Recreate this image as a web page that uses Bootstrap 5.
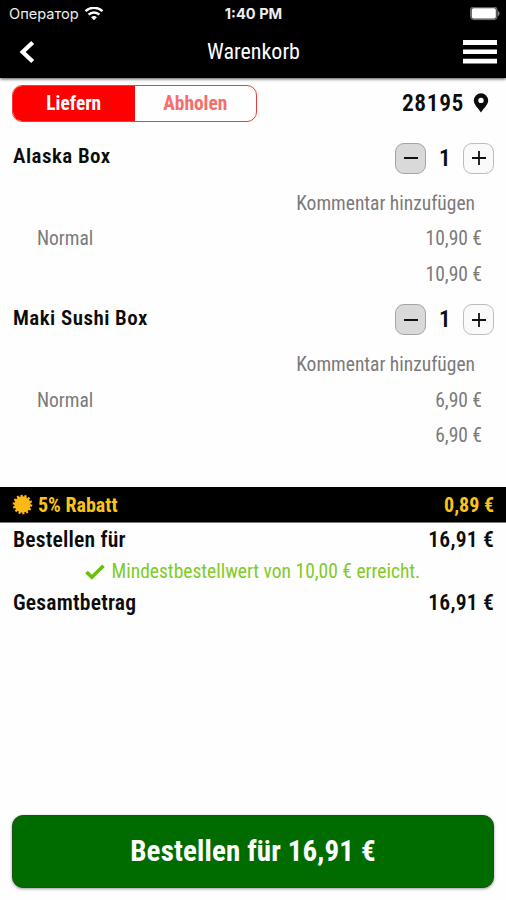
<!DOCTYPE html>
<html lang="de">
<head>
<meta charset="utf-8">
<meta name="viewport" content="width=device-width, initial-scale=1">
<title>Warenkorb</title>
<link href="https://cdn.jsdelivr.net/npm/bootstrap@5.3.0/dist/css/bootstrap.min.css" rel="stylesheet">
<style>
  body { font-family: "Roboto Condensed", Roboto, sans-serif; font-stretch: 75%; color: #0c0c0c; background: #fefefe; line-height: 1; }
  .screen { width: 506px; height: 900px; overflow: hidden; white-space: nowrap; }
  .app-head { height: 78px; background: #000; color: #fff; box-shadow: 0 1px 3px rgba(0,0,0,.7); }
  .status { height: 28px; padding: 0 6px 0 9px; font-family: Inter, Roboto, sans-serif; font-size: 14.6px; color: #eee; }
  .clock { margin-right: 2px; }
  .title-bar { height: 48px; padding: 0 9px 0 19px; font-size: 22px; }
  .page-title { margin-right: 9px; }
  .side { width: 100px; }
  .tools { height: 52px; padding: 0 15px 2px 12px; }
  .switch { width: 245px; height: 37px; border: 1px solid #f43a3a; border-radius: 10px; overflow: hidden; font-size: 19.4px; }
  .switch > div { padding-top: 1px; }
  .switch .on { background: #f00; color: #fff; }
  .switch .off { color: #f86c6c; }
  .zip { font-size: 23.5px; letter-spacing: .6px; padding-top: 1px; }
  .item-head { height: 55.3px; padding: 12.5px 12px 0 13px; font-size: 21px; font-weight: 600; letter-spacing: .45px; }
  .item-name { padding-top: 3.3px; }
  .line { height: 35.5px; padding: .5px 24px 0 37px; font-size: 19.5px; font-weight: 380; color: #7a7a7a; }
  .line.note { padding-right: 31px; }
  .step { width: 31px; height: 31px; border: 1px solid #bcbcbc; border-radius: 9px; background: #fafafa; }
  .step.less { background: #d9d9d9; border-color: #a4a4a4; }
  .qty { width: 37px; padding-left: 1px; font-size: 23px; text-align: center; }
  .discount { height: 36px; margin-top: 33.7px; padding: 0 12px; background: #000; color: #fcc419; font-size: 20px; border-bottom: 1px solid #777; }
  .sum { height: 31px; padding: 3px 12px 0 13px; font-size: 21.6px; font-weight: 600; letter-spacing: .2px; }
  .hint { height: 31.5px; padding: 4px 0 0 85px; gap: 6.5px; font-size: 19.5px; font-weight: 380; color: #7fcb27; }
  .order { height: 73px; margin: 0 12px 12px; border-radius: 11px; background: #006c00; color: #fff; font-size: 29px; letter-spacing: .14px; border: 1px solid #1c4f1c; box-shadow: 0 1px 3px rgba(0,0,0,.4); }
</style>
</head>
<body>
<div class="screen d-flex flex-column">
  <header class="app-head flex-shrink-0">
    <div class="status d-flex align-items-center justify-content-between">
      <div class="side d-flex align-items-center">
        <span>Оператор</span>
        <svg class="ms-1 flex-shrink-0" width="21" height="15" viewBox="-1.500 1 21 15" fill="none" stroke="#fff" stroke-width="2.4"><path d="M1 5.200C5.800.6 13.200.6 18 5.200"/><path d="M4.100 8.600c3-2.900 7.800-2.900 10.800 0"/><path d="M9.500 14.200 6.600 11.300c1.700-1.600 4.100-1.600 5.800 0z" fill="#fff" stroke="none"/></svg>
      </div>
      <span class="clock fw-bold">1:40 PM</span>
      <div class="side d-flex justify-content-end">
        <svg width="31" height="14" viewBox="0 1 31 14"><rect x="1.600" y="1" width="26.500" height="12.600" rx="3" fill="#444" stroke="#777" stroke-width="1"/><rect x="2.800" y="2.200" width="24" height="10.400" rx="1.800" fill="#fff"/><path d="M29 4.900c2 .8 2 4.200 0 5z" fill="#888"/></svg>
      </div>
    </div>
    <div class="title-bar d-flex align-items-center justify-content-between">
      <div class="side"><svg width="16" height="24" viewBox="0 0 16 24" fill="none" stroke="#fff" stroke-width="4.200"><path d="M13.700 2.400 3.600 12l10.100 9.600"/></svg></div>
      <span class="page-title">Warenkorb</span>
      <div class="side d-flex justify-content-end"><svg width="34" height="24" viewBox="0 0 34 24" fill="#fff"><path d="M0 0h34v5H0zM0 9.500h34v4.600H0zM0 18.800h34v4.600H0z"/></svg></div>
    </div>
  </header>

  <div class="tools d-flex align-items-center justify-content-between">
    <div class="switch d-flex fw-bold">
      <div class="on w-50 d-flex align-items-center justify-content-center">Liefern</div>
      <div class="off w-50 d-flex align-items-center justify-content-center">Abholen</div>
    </div>
    <div class="d-flex align-items-center">
      <span class="zip fw-semibold">28195</span>
      <svg class="ms-2" width="19" height="20" viewBox="2 0 19 20"><path fill="#0c0c0c" fill-rule="evenodd" d="M11 .3a7.200 7.200 0 0 0-7.200 7.200C3.800 12 9 16 11 19.500 13 16 18.200 12 18.200 7.500A7.200 7.200 0 0 0 11 .3zM11 4.700a2.700 2.700 0 1 1 0 5.400 2.700 2.700 0 0 1 0-5.400z"/></svg>
    </div>
  </div>

  <section>
    <div class="item-head d-flex justify-content-between">
      <span class="item-name">Alaska Box</span>
      <div class="d-flex align-items-center align-self-start">
        <span class="step less d-flex align-items-center justify-content-center"><svg width="14" height="14" stroke="#111" stroke-width="2"><path d="M0 7h14"/></svg></span>
        <span class="qty">1</span>
        <span class="step d-flex align-items-center justify-content-center"><svg width="14" height="14" stroke="#111" stroke-width="1.800"><path d="M0 7h14M7 0v14"/></svg></span>
      </div>
    </div>
    <div class="line note d-flex align-items-center justify-content-end">Kommentar hinzufügen</div>
    <div class="line d-flex align-items-center justify-content-between"><span>Normal</span><span>10,90 €</span></div>
    <div class="line d-flex align-items-center justify-content-end">10,90 €</div>
  </section>

  <section>
    <div class="item-head d-flex justify-content-between">
      <span class="item-name">Maki Sushi Box</span>
      <div class="d-flex align-items-center align-self-start">
        <span class="step less d-flex align-items-center justify-content-center"><svg width="14" height="14" stroke="#111" stroke-width="2"><path d="M0 7h14"/></svg></span>
        <span class="qty">1</span>
        <span class="step d-flex align-items-center justify-content-center"><svg width="14" height="14" stroke="#111" stroke-width="1.800"><path d="M0 7h14M7 0v14"/></svg></span>
      </div>
    </div>
    <div class="line note d-flex align-items-center justify-content-end">Kommentar hinzufügen</div>
    <div class="line d-flex align-items-center justify-content-between"><span>Normal</span><span>6,90 €</span></div>
    <div class="line d-flex align-items-center justify-content-end">6,90 €</div>
  </section>

  <div class="discount d-flex align-items-center justify-content-between fw-bold">
    <span class="d-flex align-items-center">
      <svg class="me-1" width="22" height="21" viewBox="-10.500 -10.500 22 21"><circle r="8.300" fill="#fcb817"/><circle r="8.700" fill="none" stroke="#fcb817" stroke-width="2.200" pathLength="28" stroke-dasharray="1.100 .9"/></svg>
      <span>5% Rabatt</span>
    </span>
    <span>0,89 €</span>
  </div>
  <div class="sum d-flex align-items-center justify-content-between"><span>Bestellen für</span><span>16,91 €</span></div>
  <div class="hint d-flex align-items-center">
    <svg width="20" height="16" viewBox="0 0 20 16" fill="none" stroke="#69bf0c" stroke-width="3.600"><path d="m1.500 8 5.300 5.200L18.500 1.800"/></svg>
    <span>Mindestbestellwert von 10,00 € erreicht.</span>
  </div>
  <div class="sum d-flex align-items-center justify-content-between"><span>Gesamtbetrag</span><span>16,91 €</span></div>

  <div class="order d-flex align-items-center justify-content-center fw-bold mt-auto">Bestellen für 16,91 €</div>
</div>
<script src="https://cdn.jsdelivr.net/npm/bootstrap@5.3.0/dist/js/bootstrap.bundle.min.js"></script>
</body>
</html>
